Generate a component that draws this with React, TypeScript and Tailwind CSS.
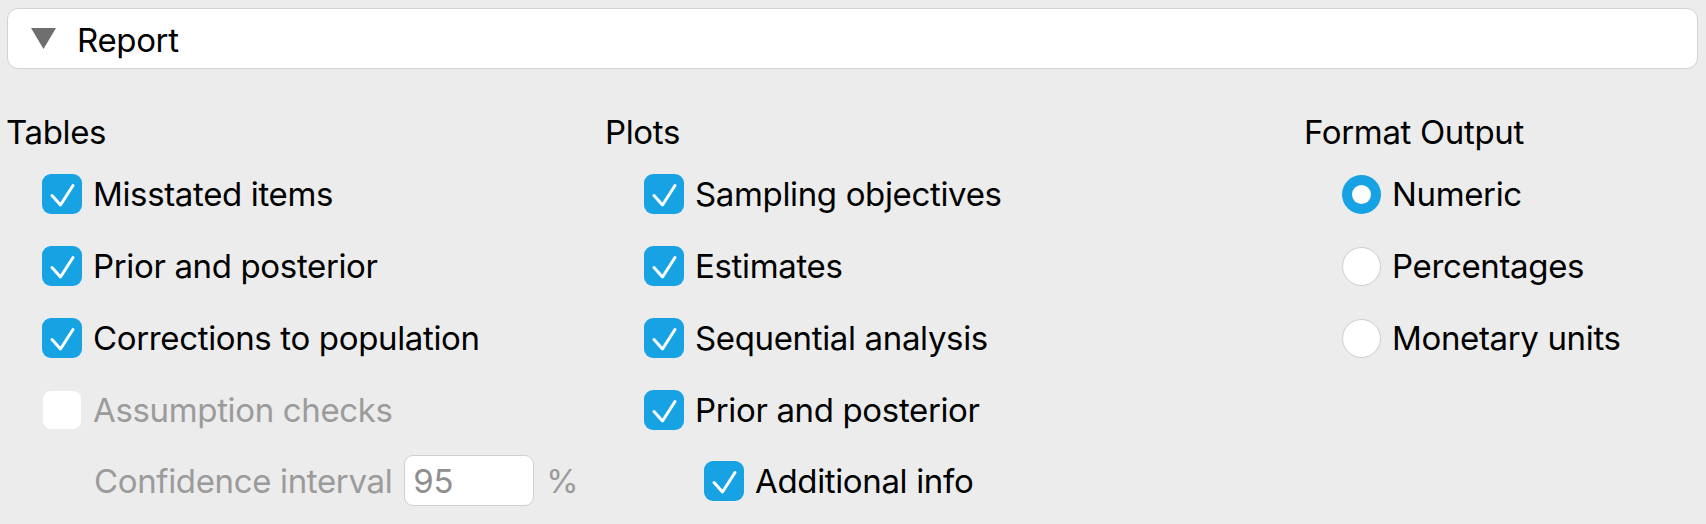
import React from "react";

const font = { fontFamily: "Inter, 'Noto Sans', sans-serif" };

function Check({ on = true, disabled = false }: { on?: boolean; disabled?: boolean }) {
  if (!on || disabled) {
    return (
      <div className="w-[40px] h-[40px] rounded-[9px] bg-white border border-[#ececec] shrink-0" />
    );
  }
  return (
    <div className="w-[40px] h-[40px] rounded-[9px] bg-[#17a2e3] shrink-0 flex items-center justify-center">
      <svg width="40" height="40" viewBox="0 0 40 40">
        <path d="M10 21.5 L18.5 31 L31 11.5" fill="none" stroke="white" strokeWidth="3" strokeLinecap="round" strokeLinejoin="round" />
      </svg>
    </div>
  );
}

function Radio({ on = false }: { on?: boolean }) {
  if (on) {
    return (
      <div className="w-[39px] h-[39px] rounded-full bg-[#17a2e3] shrink-0 flex items-center justify-center">
        <div className="w-[19px] h-[19px] rounded-full bg-white" />
      </div>
    );
  }
  return <div className="w-[39px] h-[39px] rounded-full bg-white border-[1.5px] border-[#cdcdcd] shrink-0" />;
}

function Row({ children, h = "h-[72px]" }: { children: React.ReactNode; h?: string }) {
  return <div className={`flex items-center gap-[11px] ${h}`}>{children}</div>;
}

export default function App() {
  return (
    <div className="w-[1706px] h-[524px] bg-[#ececec] text-black overflow-hidden tracking-[-0.35px]" style={font}>
      <div className="pt-[8px] pl-[7px] pr-[8px]">
        <div className="h-[61px] bg-white border-[1.5px] border-[#d2d2d2] rounded-[11px] flex items-center pl-[23px]">
          <svg width="25" height="21" viewBox="0 0 25 21" className="shrink-0">
            <polygon points="0,0 25,0 12.5,21" fill="#6e6e6e" />
          </svg>
          <span className="ml-[21px] text-[33px] leading-[40px] pt-[3px]">Report</span>
        </div>
      </div>
      <div className="flex mt-[43px] pl-[6px]">
        <div className="w-[599px] shrink-0">
          <div className="text-[33px] leading-[40px]">Tables</div>
          <div className="mt-[6px] pl-[36px] text-[33px] leading-[40px]">
            <Row><Check /><span>Misstated items</span></Row>
            <Row><Check /><span>Prior and posterior</span></Row>
            <Row><Check /><span>Corrections to population</span></Row>
            <Row><Check disabled /><span className="text-[#9b9b9b]">Assumption checks</span></Row>
            <div className="flex items-center h-[69px] pl-[52px] text-[#9b9b9b]">
              <span>Confidence interval</span>
              <div className="ml-[12px] w-[130px] h-[51px] bg-white border-[1.5px] border-[#d0d0d0] rounded-[9px] flex items-center pl-[8px] text-[#8f8f8f]">
                95
              </div>
              <span className="ml-[12px]">%</span>
            </div>
          </div>
        </div>
        <div className="w-[699px] shrink-0">
          <div className="text-[33px] leading-[40px]">Plots</div>
          <div className="mt-[6px] pl-[39px] text-[33px] leading-[40px]">
            <Row><Check /><span>Sampling objectives</span></Row>
            <Row><Check /><span>Estimates</span></Row>
            <Row><Check /><span>Sequential analysis</span></Row>
            <Row><Check /><span>Prior and posterior</span></Row>
            <div className="pl-[60px]">
              <Row h="h-[69px]"><Check /><span>Additional info</span></Row>
            </div>
          </div>
        </div>
        <div className="flex-1">
          <div className="text-[33px] leading-[40px]">Format Output</div>
          <div className="mt-[6px] pl-[38px] text-[33px] leading-[40px]">
            <Row><Radio on /><span>Numeric</span></Row>
            <Row><Radio /><span>Percentages</span></Row>
            <Row><Radio /><span>Monetary units</span></Row>
          </div>
        </div>
      </div>
    </div>
  );
}
